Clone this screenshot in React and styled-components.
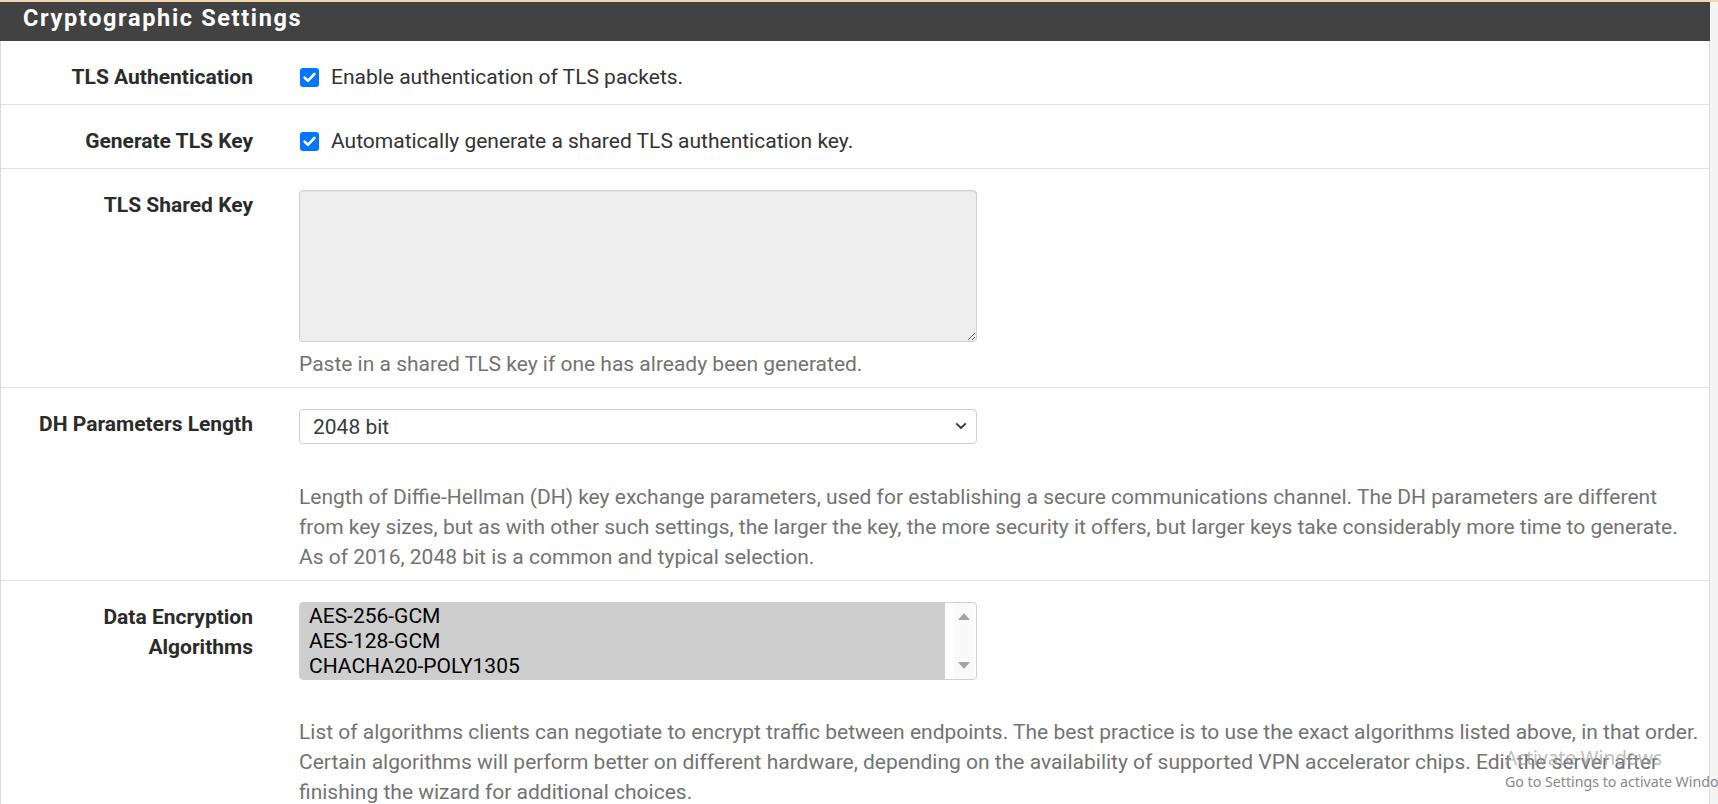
import React from "react";
import styled, { createGlobalStyle } from "styled-components";

const Global = createGlobalStyle`
  html, body {
    margin: 0;
    padding: 0;
    overflow: hidden;
    background: #f4f4f4;
  }
  body {
    font-family: Roboto, "Liberation Sans", sans-serif;
    font-size: 21px;
    color: #333;
  }
  * { box-sizing: border-box; }
`;

const Page = styled.div`
  position: relative;
  width: 1718px;
  height: 804px;
  overflow: hidden;
  background: #f4f4f4;
`;

const TopStripe = styled.div`
  height: 2px;
  background: #f3d5ae;
`;

const Panel = styled.section`
  width: 1710px;
  background: #fff;
  border-left: 1px solid #dcdcdc;
  border-right: 1px solid #dcdcdc;
`;

const PanelHeader = styled.h2`
  margin: 0 -1px;
  height: 39px;
  padding: 0 0 0 23px;
  background: #424242;
  color: #fff;
  font-family: Roboto, "Liberation Sans", sans-serif;
  font-weight: 700;
  font-size: 23.5px;
  line-height: 32px;
  letter-spacing: 1.65px;
`;

const Row = styled.div`
  display: grid;
  grid-template-columns: 252px 1fr;
  column-gap: 46px;
  padding: 21px 0 ${(p) => (p.$compact ? "12px" : "8px")};
  border-bottom: 1px solid #e2e2e2;
`;

const Label = styled.div`
  text-align: right;
  font-weight: 700;
  line-height: 30px;
  color: #2b2b2b;
`;

const Control = styled.div`
  min-width: 0;
`;

const CheckLine = styled.label`
  display: flex;
  align-items: center;
  gap: 12px;
  height: 30px;
  padding-left: 1px;
  color: #333;
  white-space: nowrap;
`;

const CheckBox = styled.span`
  flex: none;
  width: 19px;
  height: 19px;
  border-radius: 3px;
  background: #0075ff;
  display: flex;
  align-items: center;
  justify-content: center;
`;

const TextArea = styled.textarea`
  display: block;
  width: 678px;
  height: 152px;
  margin: 0;
  padding: 8px 12px;
  border: 1px solid #cfcfcf;
  border-radius: 4px;
  background: #eeeeee;
  box-shadow: inset 0 1px 1px rgba(0, 0, 0, 0.06);
  font: inherit;
  resize: vertical;
  outline: none;
`;

const Help = styled.div`
  margin-top: ${(p) => p.$gap}px;
  color: #737373;
  line-height: 30px;
  white-space: nowrap;
`;

const HelpLine = styled.span`
  display: block;
`;

const SelectWrap = styled.div`
  position: relative;
  width: 678px;
  height: 35px;
`;

const Select = styled.select`
  appearance: none;
  -webkit-appearance: none;
  width: 100%;
  height: 100%;
  margin: 0;
  padding: 0 30px 0 13px;
  border: 1px solid #cfcfcf;
  border-radius: 4px;
  background: #fff;
  color: #3a3a3a;
  font: inherit;
  outline: none;
`;

const Chevron = styled.svg`
  position: absolute;
  right: 10px;
  top: 13px;
  pointer-events: none;
`;

const ListBox = styled.div`
  display: flex;
  width: 678px;
  height: 78px;
  border: 1px solid #cfcfcf;
  border-radius: 4px;
  background: #fff;
  overflow: hidden;
`;

const OptionList = styled.div`
  flex: 1;
  background: #cecece;
  padding-top: 1px;
`;

const Option = styled.div`
  height: 25px;
  line-height: 25px;
  padding-left: 9px;
  color: #000;
  white-space: nowrap;
`;

const ScrollGap = styled.div`
  width: 9px;
  background: #fff;
`;

const ScrollTrack = styled.div`
  width: 20px;
  margin-right: 2px;
  background: #f9f9f9;
  display: flex;
  flex-direction: column;
  justify-content: space-between;
  align-items: center;
  padding: 10px 0 10px;
`;

const Watermark = styled.div`
  position: absolute;
  left: 1505px;
  top: 745px;
  font-family: "Noto Sans", "Open Sans", sans-serif;
  white-space: nowrap;
  pointer-events: none;
`;

const WatermarkTitle = styled.div`
  font-size: 19px;
  line-height: 26px;
  color: rgba(160, 160, 160, 0.7);
`;

const WatermarkSub = styled.div`
  font-size: 14.2px;
  line-height: 22px;
  color: rgba(120, 120, 120, 0.9);
`;

const Check = () => (
  <svg width="13" height="11" viewBox="0 0 13 11">
    <path d="M1.6 5.6 L4.9 8.8 L11.4 2" fill="none" stroke="#fff" strokeWidth="2.6" strokeLinecap="round" strokeLinejoin="round" />
  </svg>
);

const dhHelp = [
  "Length of Diffie-Hellman (DH) key exchange parameters, used for establishing a secure communications channel. The DH parameters are different",
  "from key sizes, but as with other such settings, the larger the key, the more security it offers, but larger keys take considerably more time to generate.",
  "As of 2016, 2048 bit is a common and typical selection.",
];

const algHelp = [
  "List of algorithms clients can negotiate to encrypt traffic between endpoints. The best practice is to use the exact algorithms listed above, in that order.",
  "Certain algorithms will perform better on different hardware, depending on the availability of supported VPN accelerator chips. Edit the server after",
  "finishing the wizard for additional choices.",
];

export default function App() {
  return (
    <Page>
      <Global />
      <TopStripe />
      <Panel>
        <PanelHeader>Cryptographic Settings</PanelHeader>

        <Row $compact>
          <Label>TLS Authentication</Label>
          <Control>
            <CheckLine>
              <CheckBox><Check /></CheckBox>
              Enable authentication of TLS packets.
            </CheckLine>
          </Control>
        </Row>

        <Row $compact>
          <Label>Generate TLS Key</Label>
          <Control>
            <CheckLine>
              <CheckBox><Check /></CheckBox>
              Automatically generate a shared TLS authentication key.
            </CheckLine>
          </Control>
        </Row>

        <Row>
          <Label>TLS Shared Key</Label>
          <Control>
            <TextArea readOnly defaultValue="" />
            <Help $gap={7}>Paste in a shared TLS key if one has already been generated.</Help>
          </Control>
        </Row>

        <Row>
          <Label>DH Parameters Length</Label>
          <Control>
            <SelectWrap>
              <Select defaultValue="2048">
                <option value="1024">1024 bit</option>
                <option value="2048">2048 bit</option>
                <option value="3072">3072 bit</option>
                <option value="4096">4096 bit</option>
              </Select>
              <Chevron width="12" height="8" viewBox="0 0 12 8">
                <path d="M1.2 1.4 L6 6 L10.8 1.4" fill="none" stroke="#333" strokeWidth="1.8" />
              </Chevron>
            </SelectWrap>
            <Help $gap={38}>
              {dhHelp.map((l) => (
                <HelpLine key={l}>{l}</HelpLine>
              ))}
            </Help>
          </Control>
        </Row>

        <Row>
          <Label>
            Data Encryption
            <br />
            Algorithms
          </Label>
          <Control>
            <ListBox role="listbox" aria-multiselectable="true">
              <OptionList>
                <Option>AES-256-GCM</Option>
                <Option>AES-128-GCM</Option>
                <Option>CHACHA20-POLY1305</Option>
              </OptionList>
              <ScrollGap />
              <ScrollTrack>
                <svg width="12" height="7" viewBox="0 0 12 7">
                  <path d="M0 7 L6 0 L12 7 Z" fill="#a3a3a3" />
                </svg>
                <svg width="12" height="7" viewBox="0 0 12 7">
                  <path d="M0 0 L12 0 L6 7 Z" fill="#a3a3a3" />
                </svg>
              </ScrollTrack>
            </ListBox>
            <Help $gap={37}>
              {algHelp.map((l) => (
                <HelpLine key={l}>{l}</HelpLine>
              ))}
            </Help>
          </Control>
        </Row>
      </Panel>
      <Watermark>
        <WatermarkTitle>Activate Windows</WatermarkTitle>
        <WatermarkSub>Go to Settings to activate Windows.</WatermarkSub>
      </Watermark>
    </Page>
  );
}
